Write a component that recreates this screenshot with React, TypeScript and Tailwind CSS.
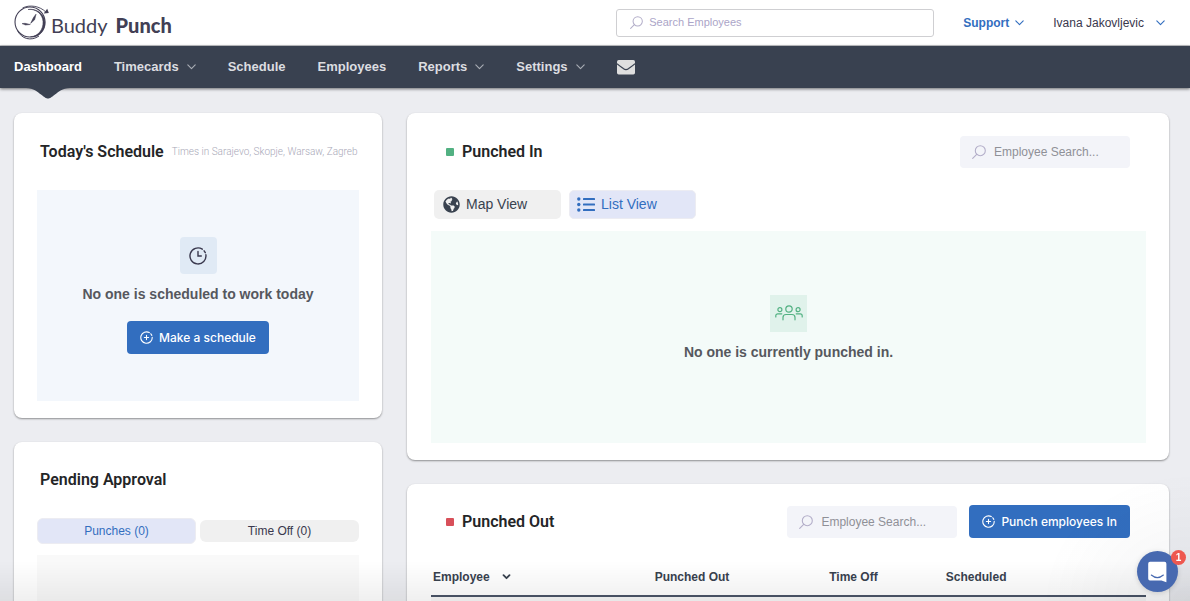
import React from "react";
import { FaGlobeAmericas } from "react-icons/fa";

function Chevron({ className = "", bold = false }: { className?: string; bold?: boolean }) {
  return (
    <svg className={className} width="9" height="6" viewBox="0 0 9 6" fill="none" stroke="currentColor" strokeWidth={bold ? 1.8 : 1.1} strokeLinecap="round" strokeLinejoin="round" aria-hidden="true">
      <path d={bold ? "M1.5 1.2 4.5 4.2 7.5 1.2" : "M.8 .8 4.5 4.7 8.2 .8"} />
    </svg>
  );
}

function SearchIcon({ size = 14 }: { size?: number }) {
  return (
    <svg className="shrink-0 text-[#b3aec9]" width={size} height={size} viewBox="0 0 14 14" fill="none" stroke="currentColor" strokeWidth="1.1" strokeLinecap="round" aria-hidden="true">
      <circle cx="8.3" cy="5.7" r="5" />
      <path d="M4.7 9.3.7 13.3" />
    </svg>
  );
}

function PlusCircle() {
  return (
    <svg width="13" height="13" viewBox="0 0 13 13" fill="none" stroke="currentColor" strokeWidth="1.1" strokeLinecap="round" aria-hidden="true">
      <path d="M9.3 1.6A5.7 5.7 0 1 0 12.2 6.2M10.8 2.8 11.8 4.4" />
      <path d="M6.5 4.4V8.6M4.4 6.5H8.6" />
    </svg>
  );
}

function Logo() {
  return (
    <a href="#" className="flex items-center text-[#423f55]" aria-label="Buddy Punch">
      <svg width="36" height="36" viewBox="0 0 36 36" fill="none" aria-hidden="true">
        <circle cx="16" cy="17" r="15" stroke="currentColor" strokeWidth="1.1" />
        <path d="M14 4.500C22 3.500 28.500 9 29 16.500 29.500 24.500 24 31.500 16.500 31.700 25 33 31.500 25.500 31 17.500 30.500 8.500 22 3 14 4.500Z" fill="currentColor" stroke="currentColor" strokeWidth=".5" />
        <path d="M3.500 25.500C7.500 34 17 36.500 25 31" stroke="currentColor" strokeWidth="1" />
        <path d="M8.500 3C16 -.8 26 1.200 31.800 7" stroke="currentColor" strokeWidth=".9" />
        <path d="M34.800 8 29.700 8.500 33.200 3.700Z" fill="currentColor" />
        <path d="M16.700 18.300 19.500 12.500 22 9.200 20.600 14.800Z" fill="currentColor" stroke="currentColor" strokeWidth=".6" />
        <path d="M16.300 19.500 11 18.300 8 18.600 11.500 20Z" fill="currentColor" stroke="currentColor" strokeWidth=".5" />
      </svg>
      <span className="flex items-baseline gap-2 pl-px pt-1 font-['Lato',sans-serif] text-[20px] leading-7">
        <span className="font-normal">Buddy</span>
        <span className="font-black">Punch</span>
      </span>
    </a>
  );
}

const navItems = [
  { label: "Dashboard", active: true },
  { label: "Timecards", menu: true },
  { label: "Schedule" },
  { label: "Employees" },
  { label: "Reports", menu: true },
  { label: "Settings", menu: true },
];

function Nav() {
  return (
    <nav className="relative z-10 flex h-[42px] shrink-0 items-stretch gap-8 bg-[#394150] pl-[14px] text-[13px] font-bold text-[#dcdde0] shadow-[0_1px_3px_rgba(0,0,0,0.55)]">
      {navItems.map((item) => (
        <a key={item.label} href="#" className={item.active ? "relative flex items-center text-white" : "flex items-center gap-2"}>
          {item.label}
          {item.menu && <Chevron className="text-[#a9adb5]" />}
          {item.active && (
            <svg className="absolute left-1/2 top-full -translate-x-1/2 text-[#394150]" width="44" height="11" viewBox="0 0 44 11" fill="currentColor" aria-hidden="true">
              <path d="M0 0H44C36 .5 33 3.500 29 6.500 25 9.500 24 10.500 22 10.500S19 9.500 15 6.500C11 3.500 8 .5 0 0Z" />
            </svg>
          )}
        </a>
      ))}
      <a href="#" className="flex items-center" aria-label="Messages">
        <svg width="18" height="15" viewBox="0 0 18 15" aria-hidden="true">
          <rect width="18" height="14.500" rx="1.700" fill="#dfdfdf" />
          <path d="M0 3.800C3 6.200 5 7.600 6.600 8.800 8.300 10 9.700 10 11.400 8.800 13 7.600 15 6.200 18 3.800" fill="none" stroke="#394150" strokeWidth="1.200" />
        </svg>
      </a>
    </nav>
  );
}

function Card({ children, className = "" }: { children: React.ReactNode; className?: string }) {
  return <section className={"rounded-lg bg-white shadow-[0_1px_2px_rgba(0,0,0,0.4)] " + className}>{children}</section>;
}

function Title({ children }: { children: React.ReactNode }) {
  return <h2 className="whitespace-nowrap font-['Roboto',sans-serif] text-base font-semibold text-[#242527]">{children}</h2>;
}

function EmployeeSearch({ id }: { id: string }) {
  return (
    <label htmlFor={id} className="flex h-8 w-[170px] items-center gap-2 rounded bg-[#f3f4f9] px-3">
      <SearchIcon />
      <input id={id} type="text" aria-label="Employee search" placeholder="Employee Search..." className="w-full min-w-0 bg-transparent text-[12px] outline-none placeholder:text-[#8f9097]" />
    </label>
  );
}

function PrimaryButton({ children }: { children: React.ReactNode }) {
  return (
    <button type="button" className="flex h-[33px] items-center gap-[6px] whitespace-nowrap rounded-sm bg-[#326ebf] px-[13px] font-['Inter',sans-serif] text-[12px] font-medium text-white">
      <PlusCircle />
      {children}
    </button>
  );
}

function Header() {
  return (
    <header className="flex h-[46px] shrink-0 items-center border-b border-[#c6c7ca] bg-white pl-[14px] pr-[25px]">
      <Logo />
      <label htmlFor="global-search" className="ml-auto flex h-7 w-[318px] items-center gap-[6px] rounded-[3px] border border-[#cfcfd2] px-[13px]">
        <SearchIcon size={13} />
        <input id="global-search" type="text" aria-label="Search employees" placeholder="Search Employees" className="w-full min-w-0 bg-transparent text-[11px] outline-none placeholder:text-[#aba5c8]" />
      </label>
      <button type="button" className="ml-[29px] flex items-center gap-[6px] text-[12px] font-bold text-[#326ebf]">
        Support <Chevron />
      </button>
      <button type="button" className="ml-[29px] flex items-center gap-3 text-[12px] text-[#39384d]">
        Ivana Jakovljevic <Chevron className="text-[#326ebf]" />
      </button>
    </header>
  );
}

function TodaysSchedule() {
  return (
    <Card className="px-[23px] pb-[17px]">
      <div className="flex h-[77px] items-center gap-2 pl-[3px]">
        <Title>Today's Schedule</Title>
        <span className="whitespace-nowrap font-['Roboto',sans-serif] text-[10px] font-light text-[#a9a9b8]">Times in Sarajevo, Skopje, Warsaw, Zagreb</span>
      </div>
      <div className="flex h-[211px] flex-col items-center justify-center bg-[#f3f7fc]">
        <div className="flex size-[37px] items-center justify-center rounded-sm bg-[#e0eaf5] text-[#39384d]">
          <svg width="18" height="18" viewBox="0 0 18 18" fill="none" stroke="currentColor" strokeWidth="1.400" strokeLinecap="round" aria-hidden="true">
            <path d="M13.300 2.200A8 8 0 1 0 16.900 7.800M15.100 3.800 16.300 5.700" />
            <path d="M9 4.500V9H12.300" />
          </svg>
        </div>
        <p className="mb-[17px] mt-[10px] text-[14px] font-bold leading-5 text-[#56585e]">No one is scheduled to work today</p>
        <PrimaryButton>Make a schedule</PrimaryButton>
      </div>
    </Card>
  );
}

function PendingApproval() {
  return (
    <Card className="px-[23px] pb-[17px]">
      <div className="flex h-[76px] items-center pl-[3px]">
        <Title>Pending Approval</Title>
      </div>
      <div className="grid grid-cols-2 items-center gap-1 text-[12px] text-[#39384d]">
        <button type="button" className="h-[26px] rounded-md border border-[#ececf2] bg-[#e2e6f7] text-[#326ebf]">Punches (0)</button>
        <button type="button" className="h-[22px] rounded-md bg-[#f0f0f0]">Time Off (0)</button>
      </div>
      <div className="mt-[11px] h-[211px] bg-[#f9f9f9]" />
    </Card>
  );
}

function PunchedIn() {
  return (
    <Card className="pb-[17px] pl-6 pr-[23px]">
      <div className="flex h-[77px] items-center gap-2 pl-[15px] pr-4">
        <span className="size-2 rounded-[1px] bg-[#52b182]" />
        <Title>Punched In</Title>
        <div className="ml-auto">
          <EmployeeSearch id="search-in" />
        </div>
      </div>
      <div className="flex gap-2 pl-[3px] text-[14px]">
        <button type="button" className="flex h-[29px] w-[127px] items-center gap-[6px] rounded-[5px] bg-[#f0f0f0] px-[9px] text-[#39424f]">
          <FaGlobeAmericas size={17} /> Map View
        </button>
        <button type="button" className="flex h-[29px] w-[127px] items-center gap-[6px] rounded-[5px] border border-[#ececf2] bg-[#e2e6f7] px-[7px] text-[#326ebf]">
          <svg width="18" height="15" viewBox="0 0 18 15" fill="currentColor" aria-hidden="true">
            <circle cx="1.800" cy="2" r="1.700" />
            <circle cx="1.800" cy="7.500" r="1.700" />
            <circle cx="1.800" cy="13" r="1.700" />
            <rect x="6" y="1" width="12" height="2" rx=".6" />
            <rect x="6" y="6.500" width="12" height="2" rx=".6" />
            <rect x="6" y="12" width="12" height="2" rx=".6" />
          </svg>
          List View
        </button>
      </div>
      <div className="mt-3 flex h-[212px] flex-col items-center justify-center bg-[#f4fbf9] pb-[18px]">
        <div className="flex size-[37px] items-center justify-center bg-[#e0f2eb] text-[#52b182]">
          <svg width="28" height="16" viewBox="0 0 28 16" fill="none" stroke="currentColor" strokeWidth="1.200" strokeLinecap="round" aria-hidden="true">
            <circle cx="14" cy="4" r="3.200" />
            <circle cx="4.900" cy="4.700" r="2" />
            <circle cx="23.100" cy="4.700" r="2" />
            <path d="M8 14.800V12.500A3 3 0 0 1 11 9.500H17A3 3 0 0 1 20 12.500V14.800" />
            <path d="M.8 12V10.800A2 2 0 0 1 2.800 8.800H6.800M27.200 12V10.800A2 2 0 0 0 25.200 8.800H21.200" />
          </svg>
        </div>
        <p className="mt-[10px] text-[14px] font-bold leading-5 text-[#56585e]">No one is currently punched in.</p>
      </div>
    </Card>
  );
}

function PunchedOut() {
  return (
    <Card className="pb-[17px] pl-6 pr-[23px]">
      <div className="flex h-[75px] items-center gap-2 pl-[15px] pr-4">
        <span className="size-2 rounded-[1px] bg-[#d8505a]" />
        <Title>Punched Out</Title>
        <div className="ml-auto flex items-center gap-3">
          <EmployeeSearch id="search-out" />
          <PrimaryButton>Punch employees In</PrimaryButton>
        </div>
      </div>
      <table className="w-full table-fixed border-collapse text-left text-[12px] text-[#39424f]">
        <thead>
          <tr className="h-[37px] border-b-2 border-[#4b5568]">
            <th className="w-[31%] pl-[2px] font-bold">
              <button type="button" className="flex items-center gap-3">
                Employee <Chevron bold />
              </button>
            </th>
            <th className="w-[24%] pl-[2px] font-bold">Punched Out</th>
            <th className="w-[17%] pl-[5px] font-bold">Time Off</th>
            <th className="font-bold">Scheduled</th>
          </tr>
        </thead>
        <tbody>
          <tr className="h-12 bg-[#f7f7f7]">
            <td colSpan={4} />
          </tr>
        </tbody>
      </table>
    </Card>
  );
}

function ChatLauncher() {
  return (
    <div className="fixed bottom-[9px] right-3 z-20">
      <button type="button" aria-label="Open chat" className="flex size-[41px] items-center justify-center rounded-full bg-[#4769b0] shadow-[0_1px_5px_rgba(0,0,0,0.15)]">
        <svg width="19" height="22" viewBox="0 0 19 22" aria-hidden="true">
          <path d="M2 .8H16.500A1.900 1.900 0 0 1 18.400 2.700V21.300L13.500 19.500H2A1.900 1.900 0 0 1 .2 17.600V2.700A1.900 1.900 0 0 1 2 .8Z" fill="#fff" />
          <path d="M3.300 14C7 17.200 11.700 17.200 15.400 14" fill="none" stroke="#4769b0" strokeWidth="1.100" strokeLinecap="round" />
        </svg>
      </button>
      <span className="absolute -right-2 -top-px flex size-[15px] items-center justify-center rounded-full bg-[#ee5850] text-[10px] font-bold text-white">1</span>
    </div>
  );
}

export default function App() {
  return (
    <div className="flex h-screen flex-col overflow-hidden bg-[#ecedf1] font-['Liberation_Sans',Arial,sans-serif]">
      <Header />
      <Nav />
      <main className="grid min-h-0 flex-1 grid-cols-[minmax(0,368fr)_minmax(0,762fr)] items-start gap-x-[25px] pl-[14px] pr-[21px] pt-[25px]">
        <div className="flex flex-col gap-6">
          <TodaysSchedule />
          <PendingApproval />
        </div>
        <div className="flex flex-col gap-6">
          <PunchedIn />
          <PunchedOut />
        </div>
      </main>
      <div className="pointer-events-none fixed inset-x-0 bottom-0 z-10 h-10 bg-linear-to-t from-black/6 to-transparent" />
      <div className="pointer-events-none fixed bottom-0 right-0 z-10 h-[130px] w-[150px] bg-[radial-gradient(ellipse_at_bottom_right,rgba(29,39,54,0.05),transparent_70%)]" />
      <ChatLauncher />
    </div>
  );
}
